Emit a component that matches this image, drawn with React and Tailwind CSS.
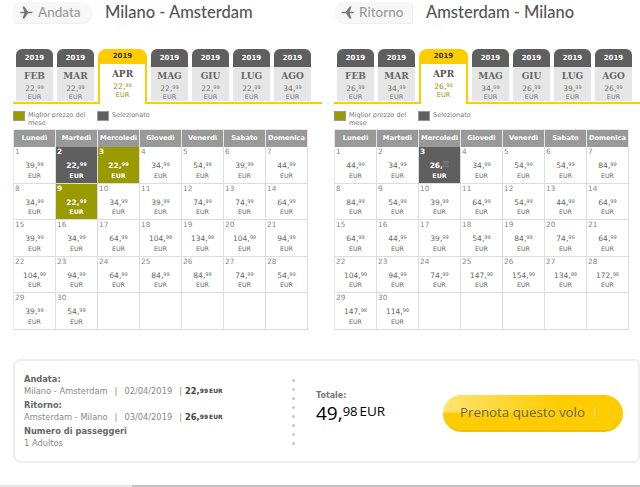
import React from 'react';

const days = ['Lunedì', 'Martedì', 'Mercoledì', 'Giovedì', 'Venerdì', 'Sabato', 'Domenica'];

const legs = [
    {
        label: 'Andata',
        route: 'Milano - Amsterdam',
        flip: false,
        pill: 'w-[78px] rounded-r-[12px] rounded-l-[3px]',
        months: [['FEB', '22,99'], ['MAR', '22,99'], ['APR', '22,99'], ['MAG', '22,99'], ['GIU', '22,99'], ['LUG', '22,99'], ['AGO', '34,99']],
        prices: [
            '39,99', '22,99', '22,99', '34,99', '54,99', '39,99', '44,99',
            '34,99', '22,99', '34,99', '39,99', '74,99', '74,99', '64,99',
            '39,99', '34,99', '64,99', '104,99', '134,99', '104,99', '94,99',
            '104,99', '94,99', '64,99', '84,99', '84,99', '74,99', '54,99',
            '39,99', '54,99',
        ],
        selected: [2],
        best: [3, 9],
    },
    {
        label: 'Ritorno',
        route: 'Amsterdam - Milano',
        flip: true,
        pill: 'w-[78px] rounded-l-[10px] rounded-r-[2px]',
        months: [['FEB', '26,99'], ['MAR', '34,99'], ['APR', '26,99'], ['MAG', '34,99'], ['GIU', '26,99'], ['LUG', '39,99'], ['AGO', '26,99']],
        prices: [
            '44,99', '34,99', '26,99', '34,99', '54,99', '54,99', '84,99',
            '84,99', '54,99', '39,99', '64,99', '54,99', '44,99', '64,99',
            '64,99', '44,99', '39,99', '54,99', '84,99', '74,99', '64,99',
            '104,99', '94,99', '74,99', '147,98', '154,99', '134,99', '172,98',
            '147,98', '114,99',
        ],
        selected: [3],
        best: [],
    },
];

const Plane = ({ flip }) => (
    <svg width="13" height="13" viewBox="0 0 24 24" className={flip ? 'rotate-180' : ''}>
        <path d="M1 10.500h7L4.500 1h3.500l7 9.500H20c2 0 3.500.7 3.500 1.500s-1.500 1.500-3.500 1.500h-5l-7 9.500H4.500L8 13.500H1L0 12z" fill="#777777" />
    </svg>
);

// cents are drawn smaller and raised, as on the fare labels
const Price = ({ value, className = '', centsClass = '' }) => {
    const [whole, cents] = value.split(',');
    return (
        <div className={`text-[7.5px] leading-[10px] ${className}`}>
            {whole},<span className={`text-[5px] align-[1.500px] ${centsClass}`}>{cents}</span>
        </div>
    );
};

const MonthTab = ({ month, price, active }) => {
    if (active) {
        return (
            <div className="w-[49px] h-[55px] shrink-0 rounded-t-lg bg-[#ffcc00] px-[2px] flex flex-col">
                <div className="h-[15px] text-center text-[7px] font-bold leading-[15px] text-[#333]">2019</div>
                <div className="flex-1 bg-white text-center pt-[4px]">
                    <div className="text-[9px] font-bold leading-[12px] text-[#555] font-['DejaVu_Serif',serif]">{month}</div>
                    <Price value={price} className="text-[#8f9400]" />
                    <div className="text-[6.5px] leading-[7px] text-[#8f9400]">EUR</div>
                </div>
            </div>
        );
    }
    return (
        <div className="w-[37px] h-[51px] shrink-0 flex flex-col">
            <div className="h-[18px] rounded-t-md bg-[#5f5f5f] text-center text-[7px] font-bold leading-[18px] text-white">2019</div>
            <div className="flex-1 bg-[#e6e6e6] text-center pt-[3px] text-[#777]">
                <div className="text-[9px] font-bold leading-[12px] text-[#666] font-['DejaVu_Serif',serif]">{month}</div>
                <Price value={price} />
                <div className="text-[6.5px] leading-[7px]">EUR</div>
            </div>
        </div>
    );
};

const DayCell = ({ day, price, isSelected, isBest, glitch }) => {
    const tone = isSelected ? 'bg-[#5f5f5f] text-white' : isBest ? 'bg-[#999900] text-white' : 'bg-white text-[#666]';
    return (
        <div className={`h-[36.6px] border-r border-b border-[#dcdcdc] ${tone}`}>
            {day && (
                <>
                    <div className={`h-[12px] pl-[1px] text-[7.3px] leading-[10px] ${isSelected || isBest ? 'text-white font-bold' : 'text-[#888]'}`}>{day}</div>
                    <div className={`text-center ${isSelected || isBest ? 'font-bold' : ''}`}>
                        <Price value={price} centsClass={glitch ? 'bg-[#777] text-[#555] font-normal' : ''} />
                        <div className="text-[6.3px] leading-[9px]">EUR</div>
                    </div>
                </>
            )}
        </div>
    );
};

const Leg = ({ leg }) => {
    const cells = Array.from({ length: 35 }, (_, i) => i);
    return (
        <div className="w-[321px] shrink-0">
            <div className="flex items-center h-[25px] pl-[13px]">
                <div className={`${leg.pill} h-[21px] bg-[#f7f7f7] shadow-[1px_1px_1px_#eeeeee] flex items-center gap-[5px] pl-[7px]`}>
                    <Plane flip={leg.flip} />
                    <span className="text-[13.500px] font-medium text-[#9a9a9a] font-['Lato',sans-serif]">{leg.label}</span>
                </div>
                <div className="ml-[14px] text-[16.500px] font-medium text-[#555] font-['Lato',sans-serif]">{leg.route}</div>
            </div>

            <div className="mt-[24px] ml-[13px] pl-[3px] flex items-start gap-[4px] border-b-[2px] border-[#ffcc00] h-[55px] -mr-[1px]">
                {leg.months.map(([month, price]) => (
                    <MonthTab key={month} month={month} price={price} active={month === 'APR'} />
                ))}
            </div>

            <div className="ml-[13px] mt-[6px] h-[19px] flex text-[6.500px] leading-[8px] text-[#777]">
                <div className="w-[12px] h-[10px] mt-[1px] bg-[#999900] border border-[#999]" />
                <div className="ml-[3px] w-[69px] pt-[1px]">Miglior prezzo del<br />mese</div>
                <div className="w-[12px] h-[10px] mt-[1px] bg-[#5f5f5f] border border-[#999]" />
                <div className="ml-[3px] pt-[1px]">Selezionato</div>
            </div>

            <div className="ml-[13px] w-[295px] border-l border-t border-[#e6e6e6]">
                <div className="grid grid-cols-7 h-[17px] bg-[#999999]">
                    {days.map((d) => (
                        <div key={d} className="border-r border-[#e6e6e6] text-center text-[6.700px] font-bold leading-[17px] text-white whitespace-nowrap">{d}</div>
                    ))}
                </div>
                <div className="grid grid-cols-7">
                    {cells.map((i) => (
                        <DayCell
                            key={i}
                            day={i < 30 ? i + 1 : null}
                            price={leg.prices[i]}
                            isSelected={leg.selected.includes(i + 1)}
                            isBest={leg.best.includes(i + 1)}
                            glitch={leg.flip && i === 2}
                        />
                    ))}
                </div>
            </div>
        </div>
    );
};

const Label = ({ children, className = '' }) => (
    <div className={`text-[8.300px] leading-[12px] font-bold text-[#666] ${className}`}>{children}</div>
);

const Trip = ({ route, date, whole, cents }) => (
    <div className="text-[8.300px] leading-[12px] text-[#888] whitespace-nowrap">
        {route}
        <span className="mx-[7px]">|</span>
        {date}
        <span className="ml-[7px] mr-[3px]">|</span>
        <span className="font-bold text-[#444]">
            {whole},<span className="text-[6px] align-[1px]">{cents}</span>
            <span className="text-[6px] align-[1px] ml-[1px]">EUR</span>
        </span>
    </div>
);

export default function App() {
    return (
        <div className="w-[640px] h-[487px] overflow-hidden bg-white font-['DejaVu_Sans',sans-serif]">
            <div className="flex">
                {legs.map((leg) => <Leg key={leg.label} leg={leg} />)}
            </div>

            <div className="ml-[13px] mt-[29px] h-[104px] rounded-l-lg rounded-r-md border-2 border-[#eeeeee] flex">
                <div className="pl-[9px] pt-[12px] w-[277px]">
                    <Label>Andata:</Label>
                    <Trip route="Milano - Amsterdam" date="02/04/2019" whole="22" cents="99" />
                    <Label className="mt-[2px]">Ritorno:</Label>
                    <Trip route="Amsterdam - Milano" date="03/04/2019" whole="26" cents="99" />
                    <Label className="mt-[2px] text-[#555]">Numero di passeggeri</Label>
                    <div className="text-[8.300px] leading-[12px] text-[#888]">1 Adultos</div>
                </div>
                <div className="flex flex-col gap-[6px] pt-[18px]">
                    {Array.from({ length: 8 }, (_, i) => <div key={i} className="w-[3px] h-[3px] rounded-full bg-[#c8c8c8]" />)}
                </div>
                <div className="ml-[21px] pt-[30px] w-[127px]">
                    <div className="text-[8px] leading-[10px] font-bold text-[#777]">Totale:</div>
                    <div className="font-['Open_Sans',sans-serif] text-black leading-[20px] whitespace-nowrap">
                        <span className="text-[19px]">49,</span>
                        <span className="text-[13px] align-[4px]">98</span>
                        <span className="text-[13.500px] align-[4px] ml-[2px]">EUR</span>
                    </div>
                </div>
                <div className="mt-[34px] w-[180px] h-[37px] rounded-full bg-[#ffcc00] bg-[linear-gradient(100deg,rgba(255,255,255,0.45),rgba(255,255,255,0)_65%)] bg-no-repeat bg-[length:100%_50%] border-b-2 border-[#f2c000] flex items-center pl-[17px] text-[13.300px] text-[#6b6750] font-['Open_Sans',sans-serif] whitespace-nowrap">
                    Prenota questo volo
                    <span className="ml-[9px] w-[1px] h-[13px] bg-[#ecdca0]" />
                </div>
            </div>

            <div className="mt-[22px] h-[2px] flex">
                <div className="w-[132px] bg-[#e6e6e6]" />
                <div className="flex-1 bg-[#c4c4c4]" />
            </div>
        </div>
    );
}
